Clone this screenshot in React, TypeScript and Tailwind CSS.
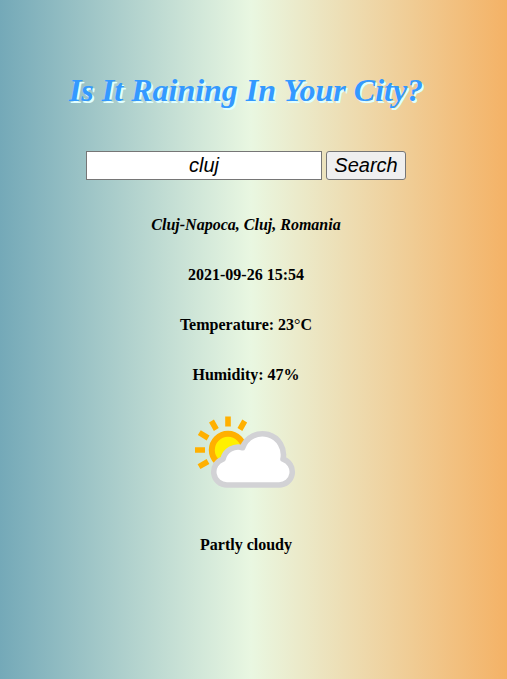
import React from "react";

function PartlyCloudy() {
  return (
    <svg width="128" height="128" viewBox="0 0 128 128" className="block blur-[0.5px]">
      <g stroke="#ffb000" strokeWidth="5.6">
        <path d="M46 27.500V37.500M29.500 32l4.800 8.500M17.300 43.700l8.800 5.300M13 61h10M17 77.700l9-5.200M62.700 32l-4.800 8.500" />
      </g>
      <circle cx="46" cy="61" r="16.2" fill="#fff000" stroke="#ffb000" strokeWidth="6" />
      <path d="M45 96H97A13.200 13.200 0 0 0 101 70.200A21.050 21.050 0 0 0 60.600 58.700A15.500 15.500 0 0 0 41 70.200A13.200 13.200 0 0 0 45 96Z" fill="#fff" stroke="#d2d2d5" strokeWidth="5.6" strokeLinejoin="round" />
    </svg>
  );
}

export default function App() {
  return (
    <main className="flex h-[679px] w-[507px] flex-col items-center overflow-hidden bg-[linear-gradient(to_right,#74a9b8,#e9f7e1_49.500%,#f4b266)] pr-[15px] font-['Liberation_Serif',serif] text-base font-bold text-black">
      <h1 className="mt-[71px] text-[32px] leading-[38px] italic text-[#3399ff] [text-shadow:2px_2px_#e0ffff]">Is It Raining In Your City?</h1>
      <form className="mt-[42px] flex gap-1 font-['Liberation_Sans',sans-serif] text-xl font-normal italic">
        <input defaultValue="cluj" className="h-[29px] w-[236px] border border-[#767676] bg-white text-center" />
        <button type="button" className="h-[29px] w-20 rounded-[3px] border border-[#767676] bg-[#efefef] pb-px leading-[26px]">Search</button>
      </form>
      <p className="mt-9 h-[50px] italic leading-[18px]">Cluj-Napoca, Cluj, Romania</p>
      <p className="h-[50px] leading-[18px]">2021-09-26 15:54</p>
      <p className="h-[50px] leading-[18px]">Temperature: 23<span className="font-normal">°</span>C</p>
      <p className="h-[23px] leading-[18px]">Humidity: 47%</p>
      <PartlyCloudy />
      <p className="mt-[19px] leading-[18px]">Partly cloudy</p>
    </main>
  );
}
